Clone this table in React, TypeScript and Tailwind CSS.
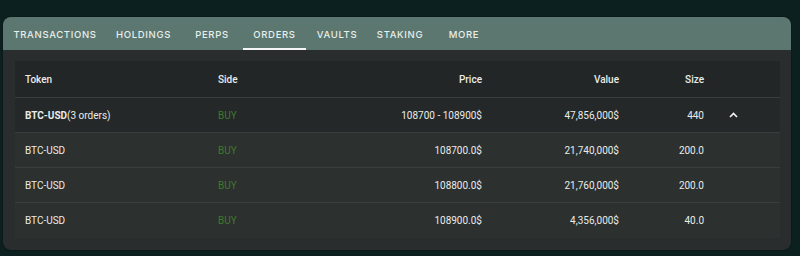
import React from "react";

const tabs: [string, string][] = [
  ["TRANSACTIONS", "w-[102px]"],
  ["HOLDINGS", "w-[75px]"],
  ["PERPS", "w-[62px]"],
  ["ORDERS", "w-[63px]"],
  ["VAULTS", "w-[62px]"],
  ["STAKING", "w-[64px]"],
  ["MORE", "w-[64px]"],
];

const rows = [
  { price: "108700.0$", value: "21,740,000$", size: "200.0" },
  { price: "108800.0$", value: "21,760,000$", size: "200.0" },
  { price: "108900.0$", value: "4,356,000$", size: "40.0" },
];

function Chevron() {
  return (
    <svg width="9" height="6" viewBox="0 0 9 6" fill="none">
      <path d="M1 5L4.5 1.5L8 5" stroke="#f2f4f3" strokeWidth="1.6" />
    </svg>
  );
}

export default function App() {
  return (
    <div
      className="w-[800px] h-[256px] bg-[#0c211f] pt-[17px] pl-[3px]"
      style={{ fontFamily: "Roboto, 'Liberation Sans', sans-serif" }}
    >
      <div className="w-[788px] h-[233px] rounded-[8px] overflow-hidden bg-[#292d2d] flex flex-col shadow-[0_0_2px_rgba(0,0,0,0.6)]">
        <div className="h-[33px] bg-[#5b776f] flex pl-[1px] shrink-0">
          {tabs.map(([t, w]) => (
            <div
              key={t}
              className={`relative ${w} pt-[3px] flex items-center justify-center text-[9.5px] font-medium tracking-[0.07em] text-[#e8eeeb]`}
              style={{ fontFamily: "Inter, 'Liberation Sans', sans-serif" }}
            >
              {t}
              {t === "ORDERS" && (
                <div className="absolute left-0 right-0 bottom-0 h-[2px] bg-[#f4f6f5]" />
              )}
            </div>
          ))}
        </div>
        <div className="pt-[11px] pl-[12px] pr-[11px]">
          <div className="w-[765px] text-[10px] text-[#e9ecea]">
            <div className="h-[37px] flex items-center bg-[#222626] border-b border-[#393e3d] font-medium">
              <div className="w-[203px] pl-[10px]">Token</div>
              <div className="w-[100px]">Side</div>
              <div className="w-[164px] text-right">Price</div>
              <div className="w-[137px] text-right">Value</div>
              <div className="w-[85px] text-right">Size</div>
            </div>
            <div className="h-[35px] flex items-center bg-[#242828] border-b border-[#393e3d]">
              <div className="w-[203px] pl-[10px]">
                <span className="font-bold">BTC-USD</span>(3 orders)
              </div>
              <div className="w-[100px] text-[#3f7a2c]">BUY</div>
              <div className="w-[164px] text-right">108700 - 108900$</div>
              <div className="w-[137px] text-right">47,856,000$</div>
              <div className="w-[85px] text-right">440</div>
              <div className="w-[58px] flex justify-center">
                <Chevron />
              </div>
            </div>
            {rows.map((r, i) => (
              <div
                key={i}
                className={`h-[35px] flex items-center bg-[#2c302f] ${
                  i < rows.length - 1 ? "border-b border-[#3a3f3e]" : ""
                }`}
              >
                <div className="w-[203px] pl-[10px]">BTC-USD</div>
                <div className="w-[100px] text-[#3f7a2c]">BUY</div>
                <div className="w-[164px] text-right">{r.price}</div>
                <div className="w-[137px] text-right">{r.value}</div>
                <div className="w-[85px] text-right">{r.size}</div>
              </div>
            ))}
          </div>
        </div>
      </div>
    </div>
  );
}
